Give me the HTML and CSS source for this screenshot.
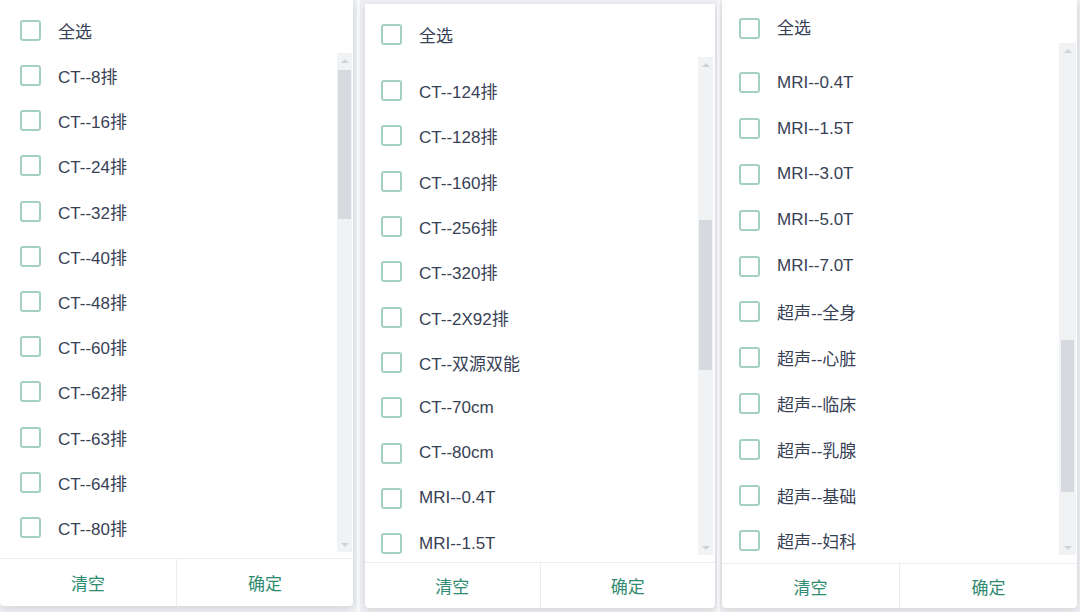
FILE: index.html
```html
<!DOCTYPE html>
<html lang="zh">
<head>
<meta charset="utf-8">
<link rel="stylesheet" href="styles.css">
</head>
<body>
<div class="stage">

  <div class="panel p1">
    <div class="head"><span class="cb"></span><span class="lbl">全选</span></div>
    <div class="body">
      <ul class="list">
        <li><span class="cb"></span><span class="lbl">CT--8排</span></li>
        <li><span class="cb"></span><span class="lbl">CT--16排</span></li>
        <li><span class="cb"></span><span class="lbl">CT--24排</span></li>
        <li><span class="cb"></span><span class="lbl">CT--32排</span></li>
        <li><span class="cb"></span><span class="lbl">CT--40排</span></li>
        <li><span class="cb"></span><span class="lbl">CT--48排</span></li>
        <li><span class="cb"></span><span class="lbl">CT--60排</span></li>
        <li><span class="cb"></span><span class="lbl">CT--62排</span></li>
        <li><span class="cb"></span><span class="lbl">CT--63排</span></li>
        <li><span class="cb"></span><span class="lbl">CT--64排</span></li>
        <li><span class="cb"></span><span class="lbl">CT--80排</span></li>
      </ul>
      <div class="sbar">
        <div class="arrow up"></div>
        <div class="track"><div class="thumb" style="margin-top:2px;height:149px"></div></div>
        <div class="arrow down"></div>
      </div>
    </div>
    <div class="foot"><div class="btn">清空</div><div class="btn">确定</div></div>
  </div>

  <div class="gap g1"><div class="stripe"></div></div>

  <div class="panel p2">
    <div class="head"><span class="cb"></span><span class="lbl">全选</span></div>
    <div class="body">
      <ul class="list">
        <li><span class="cb"></span><span class="lbl">CT--124排</span></li>
        <li><span class="cb"></span><span class="lbl">CT--128排</span></li>
        <li><span class="cb"></span><span class="lbl">CT--160排</span></li>
        <li><span class="cb"></span><span class="lbl">CT--256排</span></li>
        <li><span class="cb"></span><span class="lbl">CT--320排</span></li>
        <li><span class="cb"></span><span class="lbl">CT--2X92排</span></li>
        <li><span class="cb"></span><span class="lbl">CT--双源双能</span></li>
        <li><span class="cb"></span><span class="lbl">CT--70cm</span></li>
        <li><span class="cb"></span><span class="lbl">CT--80cm</span></li>
        <li><span class="cb"></span><span class="lbl">MRI--0.4T</span></li>
        <li><span class="cb"></span><span class="lbl">MRI--1.5T</span></li>
      </ul>
      <div class="sbar">
        <div class="arrow up"></div>
        <div class="track"><div class="thumb" style="margin-top:148px;height:150px"></div></div>
        <div class="arrow down"></div>
      </div>
    </div>
    <div class="foot"><div class="btn">清空</div><div class="btn">确定</div></div>
  </div>

  <div class="gap g2"><div class="stripe"></div></div>

  <div class="panel p3">
    <div class="head"><span class="cb"></span><span class="lbl">全选</span></div>
    <div class="body">
      <ul class="list">
        <li><span class="cb"></span><span class="lbl">MRI--0.4T</span></li>
        <li><span class="cb"></span><span class="lbl">MRI--1.5T</span></li>
        <li><span class="cb"></span><span class="lbl">MRI--3.0T</span></li>
        <li><span class="cb"></span><span class="lbl">MRI--5.0T</span></li>
        <li><span class="cb"></span><span class="lbl">MRI--7.0T</span></li>
        <li><span class="cb"></span><span class="lbl">超声--全身</span></li>
        <li><span class="cb"></span><span class="lbl">超声--心脏</span></li>
        <li><span class="cb"></span><span class="lbl">超声--临床</span></li>
        <li><span class="cb"></span><span class="lbl">超声--乳腺</span></li>
        <li><span class="cb"></span><span class="lbl">超声--基础</span></li>
        <li><span class="cb"></span><span class="lbl">超声--妇科</span></li>
      </ul>
      <div class="sbar">
        <div class="arrow up"></div>
        <div class="track"><div class="thumb" style="margin-top:282px;height:152px"></div></div>
        <div class="arrow down"></div>
      </div>
    </div>
    <div class="foot"><div class="btn">清空</div><div class="btn">确定</div></div>
  </div>

  <div class="gap g3"></div>
</div>
</body>
</html>
```

FILE: styles.css
```css
* { box-sizing: border-box; }
html, body { margin: 0; padding: 0; }
body {
  width: 1080px;
  height: 612px;
  overflow: hidden;
  background: #eef0f3;
  font-family: "Liberation Sans", "Noto Sans CJK SC", sans-serif;
  color: #384155;
}
.stage {
  display: flex;
  align-items: flex-start;
  height: 612px;
}
.panel {
  background: #fff;
  display: flex;
  flex-direction: column;
  box-shadow: 0 2px 8px rgba(0, 0, 0, 0.13);
  border-radius: 0 0 4px 4px;
  flex: none;
}
.p1 { width: 353px; height: 606px; padding-left: 20px; }
.p2 { width: 350px; height: 604px; margin-top: 4px; padding-left: 16px; margin-left: 1px; }
.p3 { width: 355px; height: 608px; padding-left: 17px; }

.gap { flex: none; height: 612px; display: flex; justify-content: center; }
.g1 { width: 11px; }
.g2 { width: 7px; }
.g3 { width: 3px; }
.stripe { width: 3px; height: 100%; background: #f7f8f9; }

.head { display: flex; align-items: center; flex: none; }
.p1 .head { height: 53px; padding-top: 7px; }
.p2 .head { height: 53px; padding-top: 7px; }
.p3 .head { height: 43px; padding-top: 14px; align-items: flex-start; }
.p3 .head .cb { margin-top: 4px; }
.p3 .head .lbl { line-height: 30px; }

.cb {
  width: 21px;
  height: 21px;
  border: 2px solid #a3d0c3;
  border-radius: 3px;
  flex: none;
  background: #fff;
}
.lbl {
  margin-left: 17px;
  font-size: 17px;
  white-space: nowrap;
}

.body { display: flex; flex: none; overflow: hidden; }
.p1 .body { height: 499px; }
.p2 .body { height: 498px; }
.p3 .body { height: 512px; }

.list {
  list-style: none;
  margin: 0;
  padding: 0;
  flex: 1;
  overflow: hidden;
}
.list li { display: flex; align-items: center; height: 45px; }
.p1 .list li { height: 45.2px; }
.p2 .list { padding-top: 11px; }
.p2 .list li { height: 45.3px; }
.p3 .list { padding-top: 17px; }
.p3 .list li { height: 45.8px; }

.sbar {
  width: 15px;
  flex: none;
  background: #f1f2f4;
  display: flex;
  flex-direction: column;
  margin-right: 1px;
}
.p2 .sbar { margin-right: 2px; }
.p3 .sbar { width: 17px; margin-right: 1px; }
.arrow { height: 15px; flex: none; display: flex; justify-content: center; align-items: center; }
.arrow::before {
  content: "";
  width: 0;
  height: 0;
  border-left: 4px solid transparent;
  border-right: 4px solid transparent;
}
.arrow.up::before { border-bottom: 4px solid #cfd2d7; }
.arrow.down::before { border-top: 4px solid #cfd2d7; }
.track { flex: 1; padding: 0 1px; }
.thumb { background: #d6d9de; width: 100%; }
.p3 .track { padding: 0 2px; }

.foot {
  margin-top: auto;
  display: flex;
  border-top: 1px solid #e9ecf0;
  flex: none;
}
.p1 .foot { height: 48px; margin-left: -20px; }
.p2 .foot { height: 46px; margin-left: -16px; }
.p3 .foot { height: 45px; margin-left: -17px; }
.btn {
  flex: 1;
  display: flex;
  align-items: center;
  justify-content: center;
  font-size: 17px;
  color: #2f8a6f;
}
.btn + .btn { border-left: 1px solid #e9ecf0; }
```
